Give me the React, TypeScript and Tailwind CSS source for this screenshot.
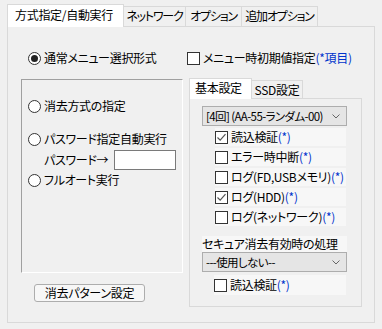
import React from "react";

// Small win32-style controls
function Radio({ checked, label }: { checked?: boolean; label: React.ReactNode }) {
  return (
    <div className="flex items-center h-4">
      <div className="w-[13px] h-[13px] rounded-full border border-[#333] bg-white flex items-center justify-center flex-shrink-0">
        {checked && <div className="w-[7px] h-[7px] rounded-full bg-[#222]" />}
      </div>
      <span className="ml-[3px] leading-4 whitespace-nowrap">{label}</span>
    </div>
  );
}

function Check({ checked, label }: { checked?: boolean; label: React.ReactNode }) {
  return (
    <div className="flex items-center h-4">
      <div className="w-[13px] h-[13px] border border-[#333] bg-white flex items-center justify-center flex-shrink-0">
        {checked && (
          <svg width="11" height="11" viewBox="0 0 11 11">
            <path d="M1.5 5.5 L4.2 8.2 L9.5 2.2" fill="none" stroke="#555" strokeWidth="1.2" />
          </svg>
        )}
      </div>
      <span className="ml-[3px] leading-4 whitespace-nowrap">{label}</span>
    </div>
  );
}

function Star() {
  return <span className="text-[#0033cc]">(*)</span>;
}

function Combo({ text }: { text: React.ReactNode }) {
  return (
    <div className="h-5 w-[145px] border border-[#adadad] bg-[#e5e5e5] flex items-center pl-[3px] pr-[6px]">
      <span className="flex-1 leading-4 whitespace-nowrap overflow-hidden text-[11.5px] tracking-[-0.6px]">{text}</span>
      <svg width="8" height="5" viewBox="0 0 8 5" className="flex-shrink-0">
        <path d="M0.5 0.5 L4 4 L7.5 0.5" fill="none" stroke="#666" strokeWidth="1" />
      </svg>
    </div>
  );
}

function CheckRow({ checked, label }: { checked?: boolean; label: React.ReactNode }) {
  return (
    <div className="h-[18px] w-[131px] bg-[#f7f7f7] flex items-center">
      <Check checked={checked} label={label} />
    </div>
  );
}

export default function App() {
  const tabs = ["ネットワーク", "オプション", "追加オプション"];
  const tabW = ["w-[62px]", "w-[56px]", "w-[76px]"];

  return (
    <div className="w-[382px] h-[329px] bg-[#f0f0f0] pt-[3px] px-[7px] text-[12px] tracking-[-0.3px] text-black font-['Noto_Sans_CJK_JP',sans-serif] [font-feature-settings:'palt'] overflow-hidden">
      {/* outer tab strip */}
      <div className="flex items-end h-[23px]">
        <div className="w-[117px] h-[23px] bg-white border border-b-0 border-[#d9d9d9] -mb-px relative z-10 pl-[7px] pt-[2px] leading-4 whitespace-nowrap">
          方式指定/自動実行
        </div>
        {tabs.map((t, i) => (
          <div
            key={t}
            className={`${tabW[i]} h-[20px] border-t border-r border-[#d9d9d9] bg-[#f0f0f0] text-center leading-[18px] whitespace-nowrap tracking-[-1.2px] overflow-hidden`}
          >
            {t}
          </div>
        ))}
      </div>

      {/* outer tab page */}
      <div className="h-[297px] border border-[#d9d9d9] bg-[#f0f0f0] flex flex-col">
        {/* top row */}
        <div className="flex pt-[23px] h-[39px]">
          <div className="ml-[20px] w-[159px]">
            <Radio checked label="通常メニュー選択形式" />
          </div>
          <Check label={<>メニュー時初期値指定<span className="text-[#0033cc]">(*項目)</span></>} />
        </div>

        <div className="flex mt-[11px]">
          {/* left column */}
          <div className="ml-[13px] w-[162px] mt-[2px] flex flex-col">
            <div className="h-[194px] border border-t-[#a0a0a0] border-l-[#a0a0a0] border-r-white border-b-white pl-[6px] pt-[18px]">
              <Radio label="消去方式の指定" />
              <div className="mt-[17px]">
                <Radio label="パスワード指定自動実行" />
              </div>
              <div className="flex items-center mt-[3px] ml-[16px] h-5">
                <span className="leading-4 w-[70px] whitespace-nowrap">パスワード→</span>
                <div className="w-[62px] h-5 border border-[#7a7a7a] bg-white" />
              </div>
              <div className="mt-[2px]">
                <Radio label="フルオート実行" />
              </div>
            </div>
            <div className="ml-[13px] mt-[11px] w-[111px] h-[18px] rounded-[3px] border border-[#adadad] bg-[#f7f7f7] flex items-center justify-center leading-4">
              消去パターン設定
            </div>
          </div>

          {/* right column: inner tab control */}
          <div className="ml-[6px] w-[173px] flex flex-col">
            <div className="flex items-end h-[21px]">
              <div className="w-[63px] h-[21px] bg-white border border-b-0 border-[#d9d9d9] -mb-px relative z-10 pl-[5px] pt-[1px] leading-4">
                基本設定
              </div>
              <div className="w-[51px] h-[18px] border-t border-r border-[#d9d9d9] text-center leading-[17px]">
                SSD設定
              </div>
            </div>
            <div className="h-[209px] border border-[#d9d9d9] bg-[#f0f0f0] pl-[12px] pt-[7px]">
              <Combo text="[4回] (AA-55-ランダム-00)" />
              <div className="ml-[13px] mt-[2px] flex flex-col gap-[2px]">
                <CheckRow checked label={<>読込検証<Star /></>} />
                <CheckRow label={<>エラー時中断<Star /></>} />
                <CheckRow label={<>ログ(FD,USBメモリ)<Star /></>} />
                <CheckRow checked label={<>ログ(HDD)<Star /></>} />
                <CheckRow label={<>ログ(ネットワーク)<Star /></>} />
              </div>
              <div className="mt-[10px] h-4 w-[145px] bg-[#f7f7f7] leading-4 whitespace-nowrap">
                セキュア消去有効時の処理
              </div>
              <Combo text="---使用しない--" />
              <div className="ml-[12px] mt-[3px] h-5 w-[132px] bg-[#f7f7f7] flex items-center">
                <Check label={<>読込検証<Star /></>} />
              </div>
            </div>
          </div>
        </div>
      </div>
    </div>
  );
}
